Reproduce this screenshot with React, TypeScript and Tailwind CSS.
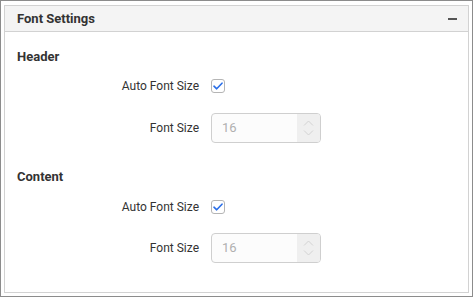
import React from "react";

const CheckIcon = () => (
  <svg width="10" height="8" viewBox="0 0 10 8" fill="none">
    <path d="M1 4.2L3.7 6.8L9 1.2" stroke="#2b6fe8" strokeWidth="1.6" strokeLinecap="round" strokeLinejoin="round" />
  </svg>
);

const Spinner = () => (
  <div className="flex w-[23px] flex-col items-center justify-center gap-[4px] rounded-r-[3px] bg-[#efefef]">
    <svg width="11" height="6" viewBox="0 0 11 6" fill="none">
      <path d="M1 5.5L5.5 1L10 5.5" stroke="#d2d2d2" strokeWidth="1" />
    </svg>
    <svg width="11" height="6" viewBox="0 0 11 6" fill="none">
      <path d="M1 0.5L5.5 5L10 0.5" stroke="#d2d2d2" strokeWidth="1" />
    </svg>
  </div>
);

const Section = ({ title, first }: { title: string; first?: boolean }) => (
  <div className={first ? "pt-[15px]" : "pt-[24px]"}>
    <div className="flex h-[20px] items-center pl-3 text-[13px] font-bold text-[#333]">{title}</div>
    <div className={`${first ? "mt-[9px]" : "mt-[10px]"} flex h-[20px] items-center`}>
      <div className="w-[194px] text-right text-[12px] text-[#333]">Auto Font Size</div>
      <div className="ml-[12px] flex h-[14px] w-[14px] items-center justify-center rounded-[3px] border border-[#b5b5b5] bg-white">
        <CheckIcon />
      </div>
    </div>
    <div className={`${first ? "mt-[17px]" : "mt-[16px]"} flex items-center`}>
      <div className="w-[194px] text-right text-[12px] text-[#333]">Font Size</div>
      <div className="ml-[12px] flex h-[30px] w-[110px] rounded-[4px] border border-[#cfcfcf] bg-[#fcfcfc]">
        <div className="flex flex-1 items-center pl-[10px] text-[13px] text-[#b0b0b0]">16</div>
        <Spinner />
      </div>
    </div>
  </div>
);

export default function App() {
  return (
    <div
      className="h-[297px] w-[473px] border border-[#8c8c8c] bg-white pb-[3px] pl-[3px] pr-[3px] pt-[4px]"
      style={{ fontFamily: "Roboto, 'Liberation Sans', sans-serif" }}
    >
      <div className="h-full border border-[#d2d2d2]">
        <div className="flex h-[26px] items-center justify-between border-b border-[#d2d2d2] bg-[#f4f4f4] pl-3 pr-[11px]">
          <span className="text-[13px] font-bold text-[#333]">Font Settings</span>
          <span className="h-[2px] w-[9px] bg-[#555]" />
        </div>
        <Section title="Header" first />
        <Section title="Content" />
      </div>
    </div>
  );
}
